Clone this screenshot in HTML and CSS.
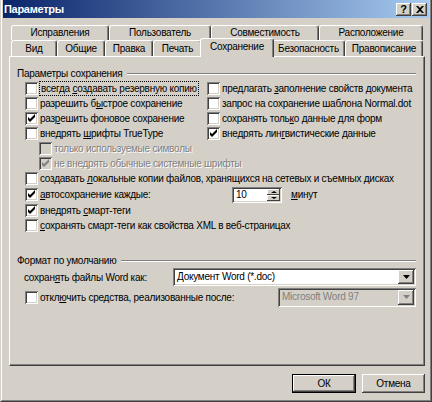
FILE: index.html
```html
<!DOCTYPE html>
<html lang="ru">
<head>
  <meta charset="UTF-8" />
  <title>Параметры</title>
  <link rel="stylesheet" href="styles.css">
</head>
<body>
  <div class="window">
    <div class="frame">
      <div class="titlebar">
        <span class="title">Параметры</span>
        <div class="caption-btns">
          <span class="cbtn help">?</span>
          <span class="cbtn">
            <svg width="8" height="7" viewBox="0 0 8 7"><path d="M0 0h2l2 2 2-2h2L5 3.5 8 7H6L4 5 2 7H0l3-3.5z" fill="#000"/></svg>
          </span>
        </div>
      </div>

      <div class="body">
        <div class="tabrow back">
          <div class="tab" style="width:98px">Исправления</div>
          <div class="tab" style="width:102px">Пользователь</div>
          <div class="tab" style="width:108px">Совместимость</div>
          <div class="tab" style="width:104px">Расположение</div>
        </div>
        <div class="tabrow front">
          <div class="tab" style="width:46px">Вид</div>
          <div class="tab" style="width:48px">Общие</div>
          <div class="tab" style="width:48px">Правка</div>
          <div class="tab" style="width:49px">Печать</div>
          <div class="tab active" style="width:74px">Сохранение</div>
          <div class="tab" style="width:73px">Безопасность</div>
          <div class="tab" style="width:78px">Правописание</div>
        </div>

        <div class="panel">
          <div class="group-head">Параметры сохранения</div>
          <div class="opts">
            <div class="cols">
              <div class="row"><span class="cb"></span><span class="text focus">всегда <u>с</u>оздавать резервную копию</span></div>
              <div class="row"><span class="cb"></span><span class="text">предлагать <u>з</u>аполнение свойств документа</span></div>
              <div class="row"><span class="cb"></span><span class="text">разрешить б<u>ы</u>строе сохранение</span></div>
              <div class="row"><span class="cb"></span><span class="text">запрос на сохранение шаблона Normal.dot</span></div>
              <div class="row"><span class="cb"><svg class="tick" viewBox="0 0 13 13"><polygon points="3,5 5,7 10,2 10,5 5,10 3,8"/></svg></span><span class="text">раз<u>р</u>ешить фоновое сохранение</span></div>
              <div class="row"><span class="cb"></span><span class="text">сохранять толь<u>к</u>о данные для форм</span></div>
              <div class="row"><span class="cb"></span><span class="text">внедрять <u>ш</u>рифты TrueType</span></div>
              <div class="row"><span class="cb"><svg class="tick" viewBox="0 0 13 13"><polygon points="3,5 5,7 10,2 10,5 5,10 3,8"/></svg></span><span class="text">внедрять лин<u>г</u>вистические данные</span></div>
            </div>
            <div class="row sub"><span class="cb dis"></span><span class="text dim">только используемые символы</span></div>
            <div class="row sub"><span class="cb dis"><svg class="tick" viewBox="0 0 13 13"><polygon points="3,5 5,7 10,2 10,5 5,10 3,8"/></svg></span><span class="text dim">не внедрять обычные системные шрифты</span></div>
            <div class="row"><span class="cb"></span><span class="text">создавать <u>л</u>окальные копии файлов, хранящихся на сетевых и съемных дисках</span></div>
            <div class="row auto">
              <span class="cb"><svg class="tick" viewBox="0 0 13 13"><polygon points="3,5 5,7 10,2 10,5 5,10 3,8"/></svg></span>
              <span class="text label-fixed"><u>а</u>втосохранение каждые:</span>
              <span class="spin">
                <span class="val">10</span>
                <span class="arrows">
                  <span class="abtn"><i class="up"></i></span>
                  <span class="abtn"><i class="down"></i></span>
                </span>
              </span>
              <span class="unit"><u>м</u>инут</span>
            </div>
            <div class="row"><span class="cb"><svg class="tick" viewBox="0 0 13 13"><polygon points="3,5 5,7 10,2 10,5 5,10 3,8"/></svg></span><span class="text">внедрять <u>с</u>март-теги</span></div>
            <div class="row"><span class="cb"></span><span class="text"><u>с</u>охранять смарт-теги как свойства XML в веб-страницах</span></div>
          </div>

          <div class="group-head second">Формат по умолчанию</div>
          <div class="frow first">
            <span class="flabel">сохран<u>я</u>ть файлы Word как:</span>
            <span class="combo wide">
              <span class="ctext">Документ Word (*.doc)</span>
              <span class="drop"><svg width="7" height="4" viewBox="0 0 7 4"><polygon points="0,0 7,0 3.5,4" fill="#000"/></svg></span>
            </span>
          </div>
          <div class="frow">
            <span class="cb"></span>
            <span class="text">откл<u>ю</u>чить средства, реализованные после:</span>
            <span class="combo dis">
              <span class="ctext">Microsoft Word 97</span>
              <span class="drop"><svg width="7" height="4" viewBox="0 0 7 4"><polygon points="0,0 7,0 3.5,4" fill="#808080"/></svg></span>
            </span>
          </div>
        </div>

        <div class="buttons">
          <span class="btn default">ОК</span>
          <span class="btn">Отмена</span>
        </div>
      </div>
    </div>
  </div>
</body>
</html>
```

FILE: styles.css
```css
:root {
  --face: #d4d0c8;
  --shadow: #808080;
  --dark: #404040;
  --light: #ffffff;
}

* {
  box-sizing: border-box;
}

body {
  margin: 0;
  background: var(--face);
  font-family: 'Liberation Sans', Arial, sans-serif;
  font-size: 10px;
  letter-spacing: -0.25px;
  color: #000;
}

u {
  text-decoration: underline;
  text-underline-offset: 1px;
}

.window {
  width: 432px;
  height: 402px;
  border-left: 1px solid var(--face);
  border-right: 1px solid var(--dark);
  border-bottom: 1px solid var(--dark);
}

.frame {
  height: 100%;
  border-left: 1px solid var(--light);
  border-right: 1px solid var(--shadow);
  border-bottom: 1px solid var(--shadow);
  padding: 0 1px 1px;
}

/* title bar */
.titlebar {
  height: 18px;
  background: linear-gradient(to right, #0a246a, #a6caf0);
  display: flex;
  align-items: center;
  justify-content: space-between;
  padding: 0 2px 0 1px;
}

.title {
  color: white;
  font-weight: bold;
  font-size: 11px;
  letter-spacing: -0.3px;
}

.caption-btns {
  display: flex;
}

.cbtn {
  width: 15px;
  height: 13px;
  background: var(--face);
  display: flex;
  align-items: center;
  justify-content: center;
  font-weight: bold;
  font-size: 11px;
  box-shadow: inset -1px -1px var(--dark), inset 1px 1px var(--light), inset -2px -2px var(--shadow);
}

.cbtn.help {
  margin-right: 1px;
}

/* tabs */
.body {
  padding: 7px 4px 0 6px;
}

.tabrow {
  display: flex;
  margin-left: 2px;
}

.tabrow.back {
  height: 15px;
}

.tabrow.front {
  height: 16px;
}

.tab {
  flex: none;
  height: 100%;
  text-align: center;
  line-height: 14px;
  white-space: nowrap;
  background: var(--face);
  border-top: 1px solid var(--light);
  border-left: 1px solid var(--light);
  border-right: 1px solid var(--dark);
  border-radius: 3px 3px 0 0;
  box-shadow: inset -1px 0 var(--shadow);
}

.front .tab {
  line-height: 15px;
}

.tab.active {
  height: 19px;
  margin: -2px -2px 0;
  align-self: flex-start;
  position: relative;
  z-index: 1;
  line-height: 16px;
}

/* page */
.panel {
  width: 416px;
  height: 310px;
  border: 1px solid;
  border-color: var(--light) var(--dark) var(--dark) var(--light);
  box-shadow: inset -1px -1px var(--shadow);
  padding: 10px 8px 0 7px;
}

.group-head {
  display: flex;
  align-items: center;
  height: 13px;
  white-space: nowrap;
}

.group-head::after {
  content: "";
  flex: 1;
  margin-left: 5px;
  border-top: 1px solid var(--shadow);
  border-bottom: 1px solid var(--light);
}

.group-head.second {
  margin-top: 21px;
}

.opts {
  padding-left: 8px;
  margin-top: 1px;
}

.cols {
  display: grid;
  grid-template-columns: 182px 1fr;
}

.row {
  display: flex;
  align-items: center;
  height: 15px;
  white-space: nowrap;
}

.row.sub {
  padding-left: 14px;
}

.row.auto {
  height: 17px;
}

.cb {
  width: 13px;
  height: 13px;
  flex: none;
  background: white;
  box-shadow: inset 1px 1px var(--shadow), inset -1px -1px var(--light), inset 2px 2px var(--dark), inset -2px -2px var(--face);
}

.cb.dis {
  background: var(--face);
}

.tick {
  display: block;
  width: 13px;
  height: 13px;
  fill: #000;
}

.cb.dis .tick {
  fill: var(--shadow);
}

.text {
  margin-left: 2px;
  line-height: 13px;
}

.text.focus {
  outline: 1px dotted #000;
  padding: 0 1px;
}

.text.dim {
  color: var(--shadow);
  text-shadow: 1px 1px var(--light);
}

.label-fixed {
  width: 192px;
}

/* spinner */
.spin {
  width: 50px;
  height: 16px;
  display: flex;
  padding: 2px;
  background: white;
  box-shadow: inset 1px 1px var(--shadow), inset -1px -1px var(--light), inset 2px 2px var(--dark), inset -2px -2px var(--face);
}

.spin .val {
  flex: 1;
  padding-left: 2px;
  line-height: 12px;
}

.arrows {
  width: 13px;
  display: flex;
  flex-direction: column;
}

.abtn {
  flex: 1;
  background: var(--face);
  display: flex;
  align-items: center;
  justify-content: center;
  box-shadow: inset -1px -1px var(--dark), inset 1px 1px var(--light);
}

.abtn i {
  width: 0;
  height: 0;
  border-left: 3px solid transparent;
  border-right: 3px solid transparent;
}

.abtn .up {
  border-bottom: 2px solid #000;
}

.abtn .down {
  border-top: 2px solid #000;
}

.unit {
  margin-left: 9px;
}

/* default format */
.frow {
  display: flex;
  align-items: center;
  height: 20px;
  padding-left: 8px;
  white-space: nowrap;
}

.frow.first {
  padding-left: 7px;
}

.flabel {
  width: 149px;
}

.combo {
  height: 18px;
  display: flex;
  padding: 2px;
  background: white;
  box-shadow: inset 1px 1px var(--shadow), inset -1px -1px var(--light), inset 2px 2px var(--dark), inset -2px -2px var(--face);
}

.combo.wide {
  flex: 1;
}

.combo.dis {
  width: 138px;
  height: 19px;
  margin-left: auto;
  background: var(--face);
  color: var(--shadow);
}

.ctext {
  flex: 1;
  padding-left: 2px;
  line-height: 14px;
}

.drop {
  width: 16px;
  background: var(--face);
  display: flex;
  align-items: center;
  justify-content: center;
  box-shadow: inset -1px -1px var(--dark), inset 1px 1px var(--light), inset -2px -2px var(--shadow);
}

/* buttons */
.buttons {
  display: flex;
  justify-content: flex-end;
  gap: 6px;
  margin-top: 8px;
}

.btn {
  width: 63px;
  height: 19px;
  background: var(--face);
  display: flex;
  align-items: center;
  justify-content: center;
  box-shadow: inset -1px -1px var(--dark), inset 1px 1px var(--light), inset -2px -2px var(--shadow);
}

.btn.default {
  width: 64px;
  border: 1px solid #000;
}
```
